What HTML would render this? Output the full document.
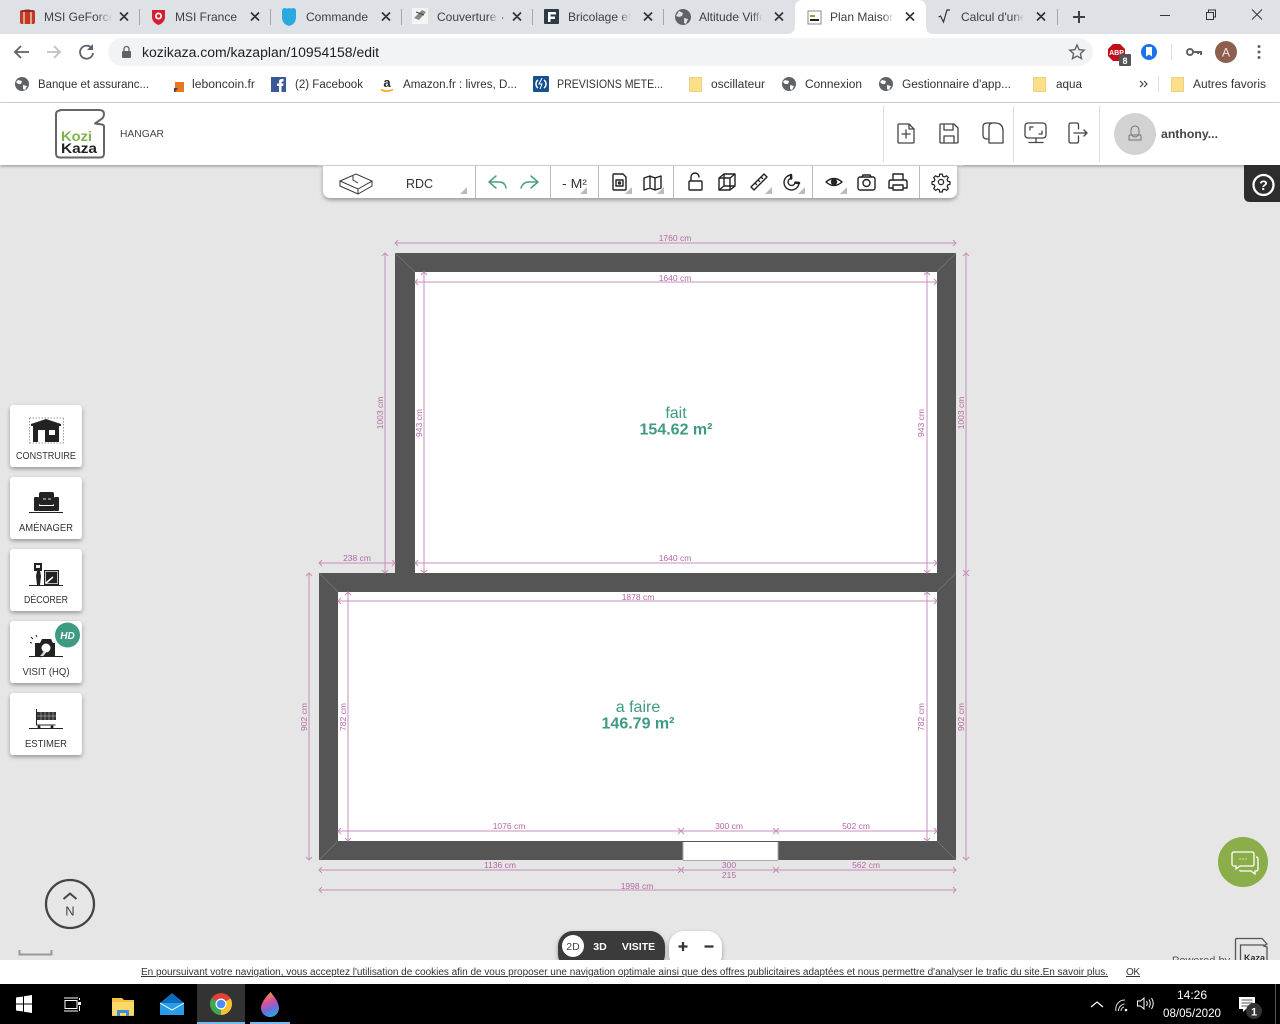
<!DOCTYPE html>
<html lang="fr"><head><meta charset="utf-8"><title>Plan Maison</title>
<style>
html,body{margin:0;padding:0;width:1280px;height:1024px;overflow:hidden;background:#e6e6e6}
svg{display:block;position:absolute;left:0;top:0}
text{font-family:"Liberation Sans",sans-serif}
.tab{font-size:12px;fill:#3c4043}
.bm{font-size:11.5px;fill:#333}
.x{stroke:#333;stroke-width:1.7;fill:none}
.sep{stroke:#a5a8ad;stroke-width:1}
.d{stroke:#c78fbc;stroke-width:1;fill:none}
.dt{font-size:8.5px;fill:#b268a4;text-anchor:middle}
.ic{stroke:#222;stroke-width:1.4;fill:none;stroke-linejoin:round;stroke-linecap:round}
.ih{stroke:#444;stroke-width:1.3;fill:none;stroke-linejoin:round;stroke-linecap:round}
.tri{fill:#bbb}
.lab{font-size:10px;fill:#333;text-anchor:middle}
</style></head><body>
<svg width="1280" height="1024" viewBox="0 0 1280 1024" xmlns="http://www.w3.org/2000/svg">
<defs>
<filter id="sh" x="-20%" y="-20%" width="140%" height="150%"><feDropShadow dx="0" dy="2" stdDeviation="2" flood-color="#000" flood-opacity=".35"/></filter>
<filter id="sh2" x="-5%" y="-20%" width="110%" height="160%"><feDropShadow dx="0" dy="1" stdDeviation="1.5" flood-color="#000" flood-opacity=".4"/></filter>
<linearGradient id="fd"><stop offset="0" stop-color="#dee1e6" stop-opacity="0"/><stop offset=".75" stop-color="#dee1e6"/></linearGradient>
<linearGradient id="fw"><stop offset="0" stop-color="#fff" stop-opacity="0"/><stop offset=".75" stop-color="#fff"/></linearGradient>
<linearGradient id="drop" x1=".3" y1="0" x2=".6" y2="1"><stop offset="0" stop-color="#f6a12c"/><stop offset=".4" stop-color="#d64fa0"/><stop offset=".7" stop-color="#6a6fdc"/><stop offset="1" stop-color="#2aa9e0"/></linearGradient>
</defs>

<!-- canvas -->
<rect width="1280" height="1024" fill="#e6e6e6"/>

<!-- tab strip -->
<rect width="1280" height="34" fill="#dee1e6"/>
<path d="M787 34q8 0 8-8V8q0-8 8-8h115q8 0 8 8v18q0 8 8 8z" fill="#fff"/>
<g class="sep"><path d="M139.500 9v16M270.500 9v16M401.500 9v16M532.500 9v16M663.500 9v16M1057.500 9v16"/></g>
<text class="tab" x="44" y="21">MSI GeForce</text><rect x="96" y="8" width="22" height="18" fill="url(#fd)"/>
<text class="tab" x="175" y="21">MSI France</text>
<text class="tab" x="306" y="21">Commande</text>
<text class="tab" x="437" y="21">Couverture -</text><rect x="488" y="8" width="14" height="18" fill="url(#fd)"/>
<text class="tab" x="568" y="21">Bricolage et</text><rect x="620" y="8" width="14" height="18" fill="url(#fd)"/>
<text class="tab" x="699" y="21">Altitude Viffo</text><rect x="752" y="8" width="14" height="18" fill="url(#fd)"/>
<text class="tab" x="830" y="21">Plan Maison</text><rect x="883" y="8" width="14" height="18" fill="url(#fw)"/>
<text class="tab" x="961" y="21">Calcul d'une</text><rect x="1013" y="8" width="14" height="18" fill="url(#fd)"/>
<g class="x">
<path d="M120 12.500l8 8M128 12.500l-8 8M251 12.500l8 8M259 12.500l-8 8M382 12.500l8 8M390 12.500l-8 8M513 12.500l8 8M521 12.500l-8 8M644 12.500l8 8M652 12.500l-8 8M775 12.500l8 8M783 12.500l-8 8M906 12.500l8 8M914 12.500l-8 8M1037 12.500l8 8M1045 12.500l-8 8"/>
</g>
<!-- tab icons -->
<rect x="20" y="10" width="15" height="14" rx="2" fill="#c0392b"/><path d="M24 10v14M31 10v14" stroke="#f3c9a0" stroke-width="1.500"/><path d="M20 12q7.500-5 15 0" fill="#8d2a1e"/>
<path d="M152 10h13v8q-1 5-6.500 7q-5.500-2-6.500-7z" fill="#d4202e"/><circle cx="158.500" cy="16" r="3.500" fill="#fff"/><circle cx="158.500" cy="16" r="1.800" fill="#d4202e"/>
<path d="M282 11q0-3 3-3q2 1 4 0q2 1 4 0q3 0 3 3v6q0 7-7 9q-7-2-7-9z" fill="#29a9e0"/>
<rect x="412" y="8" width="16" height="16" fill="#f4f4f4"/><path d="M414 18l8-8 4 2-7 8z" fill="#888"/><path d="M416 12l8 3" stroke="#444"/>
<rect x="544" y="9" width="15" height="15" rx="1" fill="#2c3946"/><path d="M548 12h8v2.500h-5.500v2h4.500v2.500h-4.500v3H548z" fill="#fff"/>
<g><circle cx="683" cy="17" r="8" fill="#5f6368"/><path d="M679 11l4 2-1 3-3 1-3-1zM684 18l4 1-2 5-2-1z" fill="#dee1e6"/></g>
<rect x="808" y="11" width="13" height="13" fill="#fff" stroke="#888"/><path d="M810 16h5" stroke="#7aa63f" stroke-width="2"/><path d="M810 20h9" stroke="#222" stroke-width="2"/>
<path d="M938.500 17l2-1 3 6 3.500-12h3" stroke="#333" stroke-width="1.200" fill="none"/>
<path d="M1079 11v12M1073 17h12" stroke="#3c4043" stroke-width="2" fill="none"/>
<!-- window controls -->
<path d="M1160 15.500h10" stroke="#333" stroke-width="1"/>
<path d="M1206.500 12.500h7v7h-7zM1208.500 12.500v-2.500h7v7h-2" stroke="#333" fill="none"/>
<path d="M1252 9.500l10 10M1262 9.500l-10 10" stroke="#333" fill="none"/>

<!-- toolbar -->
<rect y="34" width="1280" height="68" fill="#fff"/>
<rect x="108" y="38" width="985" height="28" rx="14" fill="#f1f3f4"/>
<path d="M21 46l-6 6 6 6M15 52h14" stroke="#5f6368" stroke-width="1.800" fill="none"/>
<path d="M54 46l6 6-6 6M47 52h13" stroke="#bdc1c6" stroke-width="1.800" fill="none"/>
<path d="M91.500 48a6.500 6.500 0 1 0 1.500 5" stroke="#5f6368" stroke-width="1.800" fill="none"/><path d="M93 44v6h-6z" fill="#5f6368"/>
<rect x="122" y="51" width="9" height="7" rx="1" fill="#5f6368"/><path d="M124 51v-2a2.500 2.500 0 0 1 5 0v2" stroke="#5f6368" stroke-width="1.300" fill="none"/>
<text x="142" y="57" font-size="13.500" fill="#202124" textLength="237" lengthAdjust="spacingAndGlyphs">kozikaza.com/kazaplan/10954158/edit</text>
<path d="M1077 45l2.100 4.700 5.100.5-3.800 3.400 1.100 5-4.500-2.600-4.500 2.600 1.100-5-3.800-3.400 5.100-.5z" stroke="#5f6368" stroke-width="1.400" fill="none"/>
<path d="M1113 44h7l5 5v7l-5 5h-7l-5-5v-7z" fill="#c0101c"/>
<text x="1116.500" y="55" font-size="7" font-weight="bold" fill="#fff" text-anchor="middle">ABP</text>
<rect x="1119" y="54" width="12" height="12" rx="1" fill="#555"/><text x="1125" y="64" font-size="9" font-weight="bold" fill="#fff" text-anchor="middle">8</text>
<circle cx="1149" cy="52" r="8" fill="#1a73e8"/><path d="M1146 47h6v9.500l-3-2-3 2z" fill="#fff"/>
<path d="M1171.500 44v16" stroke="#ddd"/>
<circle cx="1190" cy="52" r="3" stroke="#5f6368" stroke-width="2" fill="none"/><path d="M1193 52h8v3M1198 52v2" stroke="#5f6368" stroke-width="2" fill="none"/>
<circle cx="1226" cy="52" r="11" fill="#8c5f50"/><text x="1226" y="56.500" font-size="12" fill="#f3e6e0" text-anchor="middle">A</text>
<circle cx="1259" cy="46.500" r="1.500" fill="#5f6368"/><circle cx="1259" cy="52" r="1.500" fill="#5f6368"/><circle cx="1259" cy="57.500" r="1.500" fill="#5f6368"/>

<!-- bookmarks -->
<g fill="#5f6368">
<circle cx="22" cy="84" r="7"/><circle cx="789" cy="84" r="7"/><circle cx="886" cy="84" r="7"/>
</g>
<g fill="#fff"><path d="M18 80l4 1-1 3-3 0-2-2zM23 85l4 1-2 4-2-1zM785 80l4 1-1 3-3 0-2-2zM790 85l4 1-2 4-2-1zM882 80l4 1-1 3-3 0-2-2zM887 85l4 1-2 4-2-1z"/></g>
<text class="bm" x="38" y="88" textLength="111" lengthAdjust="spacingAndGlyphs">Banque et assuranc...</text>
<rect x="175" y="82" width="9" height="10" fill="#e87722"/><path d="M174 92v-4l4 0-3 4z" fill="#444"/>
<text class="bm" x="192" y="88" textLength="63" lengthAdjust="spacingAndGlyphs">leboncoin.fr</text>
<rect x="271" y="77" width="15" height="15" fill="#3b5998"/><path d="M279 92v-6h-2v-2.500h2v-2q0-2.500 3-2.500h1.500v2.500h-1q-1 0-1 1v1h2l-.4 2.500h-1.600v6z" fill="#fff"/>
<text class="bm" x="295" y="88" textLength="68" lengthAdjust="spacingAndGlyphs">(2) Facebook</text>
<text x="387" y="87" font-size="13" font-weight="bold" fill="#222" text-anchor="middle">a</text><path d="M381 89.500q6 3.500 12 0" stroke="#f90" stroke-width="1.500" fill="none"/>
<text class="bm" x="403" y="88" textLength="114" lengthAdjust="spacingAndGlyphs">Amazon.fr : livres, D...</text>
<rect x="533" y="76" width="16" height="16" rx="1" fill="#15508f"/><path d="M538 80a5 5 0 0 0 0 8M544 80a5 5 0 0 1 0 8" stroke="#fff" stroke-width="1.500" fill="none"/><path d="M542 78l-3 6h3l-2 5" stroke="#fff" fill="none"/>
<text class="bm" x="557" y="88" textLength="106" lengthAdjust="spacingAndGlyphs">PREVISIONS METE...</text>
<g fill="#fbe08a" stroke="#e8c765" stroke-width=".7">
<path d="M689.500 77.500h12v14h-12zM1033.500 77.500h12v14h-12zM1171.500 77.500h12v14h-12z"/></g>
<text class="bm" x="711" y="88" textLength="54" lengthAdjust="spacingAndGlyphs">oscillateur</text>
<text class="bm" x="805" y="88" textLength="57" lengthAdjust="spacingAndGlyphs">Connexion</text>
<text class="bm" x="902" y="88" textLength="109" lengthAdjust="spacingAndGlyphs">Gestionnaire d'app...</text>
<text class="bm" x="1056" y="88" textLength="26" lengthAdjust="spacingAndGlyphs">aqua</text>
<path d="M1140 81l3 3-3 3M1144 81l3 3-3 3" stroke="#444" stroke-width="1.200" fill="none"/>
<path d="M1158.500 76v16" stroke="#ddd"/>
<text class="bm" x="1193" y="88" textLength="73" lengthAdjust="spacingAndGlyphs">Autres favoris</text>

<!-- page header -->
<rect y="102" width="1280" height="1" fill="#ddd"/>
<rect y="103" width="1280" height="62" fill="#fff" filter="url(#sh2)"/>
<path d="M60 110h39q5 0 5 4q0 4-4 6l-5 3.500 7 1q2 .5 2 2v27q0 4-4 4H60q-4 0-4-4v-39q0-4 4-4z" fill="#fff" stroke="#666" stroke-width="2" stroke-linejoin="round"/>
<text x="61" y="141" font-size="14" font-weight="bold" fill="#7fb24a" textLength="31" lengthAdjust="spacingAndGlyphs">Kozi</text>
<text x="61" y="153" font-size="14" font-weight="bold" fill="#222" textLength="36" lengthAdjust="spacingAndGlyphs">Kaza</text>
<text x="120" y="137" font-size="10.500" fill="#444" textLength="44" lengthAdjust="spacingAndGlyphs">HANGAR</text>
<g stroke="#ddd"><path d="M883.500 106v56M1013.500 106v56M1099.500 106v56"/></g>
<g class="ih">
<path d="M899 124h10l5 5v13q0 1-1 1h-14q-1 0-1-1v-17q0-1 1-1zM909 124v5h5M906 130v8M902 134h8"/>
<path d="M941 124h13l4 4v14q0 1-1 1h-16q-1 0-1-1v-17q0-1 1-1zM944 124v6h9v-6M944 143v-7h10v7"/>
<path d="M994 123h-7q-4 0-4 4v8q0 4 4 4h2M989 143v-16q0-4 4-4h2q8 0 8 8v12z"/>
<rect x="1025" y="123" width="21" height="15" rx="3"/><path d="M1036 138v4M1029 142.500h14M1030 130v-3h3M1042 131v3h-3"/>
<path d="M1077 123h-6q-2 0-2 2v16q0 2 2 2h6q1.500 0 1.500-2v-5M1078.500 129v-4q0-2-1.500-2M1074 133h13M1084 130l3 3-3 3"/>
</g>
<circle cx="1135" cy="134" r="21" fill="#d2d2d2"/>
<path d="M1131 130a4 4 0 0 1 8 0v3a4 4 0 0 1-8 0zM1130 135h10q1 0 1 1v4h-12v-4q0-1 1-1z" stroke="#777" fill="none"/>
<text x="1161" y="138" font-size="12" font-weight="bold" fill="#444" textLength="57" lengthAdjust="spacingAndGlyphs">anthony...</text>

<!-- help -->
<path d="M1244 165h36v37h-30q-6 0-6-6z" fill="#2d2d2d"/>
<circle cx="1263.500" cy="185" r="10" stroke="#fff" stroke-width="2.300" fill="none"/>
<text x="1263.500" y="190" font-size="14" font-weight="bold" fill="#fff" text-anchor="middle">?</text>

<!-- floor plan -->
<g>
<path d="M395 253h561v607H319V573h76z" fill="#555"/>
<rect x="415" y="272" width="522" height="301" fill="#fff"/>
<rect x="338" y="592" width="599" height="249" fill="#fff"/>
<rect x="683" y="842" width="95" height="18" fill="#fff"/>
<path d="M683 842v18M778 842v18M683 860.500h95" stroke="#aaa" fill="none"/>
<g stroke="#777" stroke-width=".7"><path d="M395 253l20 19M956 253l-19 19M319 573l19 19M319 860l19-19M956 860l-19-19M956 573l-19 19"/></g>
</g>
<g class="d">
<path d="M395 243h561M398 240l-3 3 3 3M953 240l3 3-3 3"/>
<path d="M415 282h522M418 279l-3 3 3 3M934 279l3 3-3 3"/>
<path d="M385 253v320M382 256l3-3 3 3M382 570l3 3 3-3"/>
<path d="M966 253v320M963 256l3-3 3 3M963 570l6 6M969 570l-6 6"/>
<path d="M966 573v287M963 857l3 3 3-3"/>
<path d="M424 272v301M421 275l3-3 3 3M421 570l3 3 3-3"/>
<path d="M927 272v301M924 275l3-3 3 3M924 570l3 3 3-3"/>
<path d="M415 563h522M418 560l-3 3 3 3M934 560l3 3-3 3"/>
<path d="M319 563h76M322 560l-3 3 3 3M392 560l3 3-3 3"/>
<path d="M309 573v287M306 576l3-3 3 3M306 857l3 3 3-3"/>
<path d="M348 592v249M345 595l3-3 3 3M345 838l3 3 3-3"/>
<path d="M927 592v249M924 595l3-3 3 3M924 838l3 3 3-3"/>
<path d="M338 601h599M341 598l-3 3 3 3M934 598l3 3-3 3"/>
<path d="M338 831h599M341 828l-3 3 3 3M934 828l3 3-3 3"/>
<path d="M678 828l6 6M684 828l-6 6M773 828l6 6M779 828l-6 6"/>
<path d="M319 870h637M322 867l-3 3 3 3M953 867l3 3-3 3"/>
<path d="M678 867l6 6M684 867l-6 6M773 867l6 6M779 867l-6 6"/>
<path d="M319 890h637M322 887l-3 3 3 3M953 887l3 3-3 3"/>
</g>
<g class="dt">
<text x="675" y="241">1760 cm</text>
<text x="675" y="281">1640 cm</text>
<text x="675" y="561">1640 cm</text>
<text x="357" y="561">238 cm</text>
<text x="638" y="600">1878 cm</text>
<text x="509" y="829">1076 cm</text>
<text x="729" y="829">300 cm</text>
<text x="856" y="829">502 cm</text>
<text x="500" y="868">1136 cm</text>
<text x="729" y="868">300</text>
<text x="729" y="878">215</text>
<text x="866" y="868">562 cm</text>
<text x="637" y="889">1998 cm</text>
<text transform="translate(383 413) rotate(-90)">1003 cm</text>
<text transform="translate(964 413) rotate(-90)">1003 cm</text>
<text transform="translate(422 423) rotate(-90)">943 cm</text>
<text transform="translate(924 423) rotate(-90)">943 cm</text>
<text transform="translate(307 717) rotate(-90)">902 cm</text>
<text transform="translate(964 717) rotate(-90)">902 cm</text>
<text transform="translate(346 717) rotate(-90)">782 cm</text>
<text transform="translate(924 717) rotate(-90)">782 cm</text>
</g>
<g text-anchor="middle" fill="#3f9a83">
<text x="676" y="418" font-size="16">fait</text>
<text x="676" y="434.500" font-size="16" font-weight="bold">154.62 m²</text>
<text x="638" y="712" font-size="16">a faire</text>
<text x="638" y="728.500" font-size="16" font-weight="bold">146.79 m²</text>
</g>

<!-- top tools -->
<path d="M323 166h634v24q0 8-8 8H331q-8 0-8-8z" fill="#fff" filter="url(#sh)"/>
<rect y="165" x="318" width="645" height="1" fill="#ccc"/>
<g stroke="#bbb"><path d="M475.500 166v32M550.500 166v32M598.500 166v32M673.500 166v32M812.500 166v32M919.500 166v32"/></g>
<g stroke="#333" fill="none" stroke-width="1"><path d="M340 181l16-7 16 7-14 8zM340 181v5l18 8 14-8v-5M358 189v5M353 176v4l5 3"/></g>
<text x="419.500" y="188" font-size="12.500" fill="#333" text-anchor="middle">RDC</text>
<g class="tri"><path d="M467 187v7h-7zM587 187v7h-7zM632 187v7h-7zM664 187v7h-7zM772 187v7h-7zM805 187v7h-7zM847 187v7h-7z"/></g>
<g stroke="#4e9d87" stroke-width="1.500" fill="none" stroke-linecap="round" stroke-linejoin="round">
<path d="M496 176l-7 6 7 6M489 182h10q6 0 7 6"/>
<path d="M531 176l7 6-7 6M538 182h-9q-6 0-8 6"/>
</g>
<text x="562" y="188" font-size="12.500" fill="#333" textLength="25" lengthAdjust="spacingAndGlyphs">- M²</text>
<g class="ic">
<path d="M614 174h9l3 3v12q0 1-1 1h-11q-1 0-1-1v-14q0-1 1-1z"/><rect x="616" y="180" width="7" height="6"/><circle cx="619.500" cy="183" r="1"/>
<path d="M644 178l6-2 5 2 6-2v12l-6 2-5-2-6 2zM650 176v12M655 178v12"/>
<path d="M689 189v-7q0-1 1-1h11q1 0 1 1v7q0 1-1 1h-11q-1 0-1-1zM691 181v-4a4 4 0 0 1 8 0"/>
<path d="M719 178h11v12h-11zM719 178l5-4h11v12l-5 4M735 174l-5 4M724 174v12h11M724 186l-5 4"/>
<path d="M751 187l13-13 3 3-13 13zM755 183l1.500 1.500M758 180l1.500 1.500M761 177l1.500 1.500"/>
<path d="M791 175a7.500 7.500 0 1 0 8 8l-4-.5a3.500 3.500 0 1 1-4-4z"/>
<path d="M791 175l.2 3.500" stroke-width="2.500"/><path d="M799 183l-3.500-.4" stroke-width="2.500"/>
<path d="M826 182q8-7 16 0q-8 7-16 0z"/><circle cx="834" cy="182" r="2.500" fill="#222"/>
<rect x="858" y="177" width="17" height="13" rx="2"/><circle cx="866.500" cy="183" r="3.500"/><path d="M862 177l1-2h7l1 2"/>
<path d="M893 180v-6h10v6M889 188v-6q0-2 2-2h14q2 0 2 2v6h-4M893 188h-4M893 185h10v5h-10z"/>
<g transform="translate(941 182) scale(.88) translate(-941 -182)"><path d="M939.500 173h3l.5 2.500 2 .8 2.200-1.400 2.100 2.100-1.400 2.200.8 2 2.500.5v3l-2.500.5-.8 2 1.400 2.200-2.100 2.100-2.200-1.400-2 .8-.5 2.500h-3l-.5-2.500-2-.8-2.200 1.400-2.100-2.100 1.400-2.200-.8-2-2.500-.5v-3l2.500-.5.8-2-1.400-2.200 2.100-2.100 2.200 1.400 2-.8z"/><circle cx="941" cy="182" r="3"/></g>
</g>

<!-- side buttons -->
<g fill="#fff" filter="url(#sh)">
<rect x="10" y="405" width="72" height="62" rx="3"/>
<rect x="10" y="477" width="72" height="62" rx="3"/>
<rect x="10" y="549" width="72" height="62" rx="3"/>
<rect x="10" y="621" width="72" height="62" rx="3"/>
<rect x="10" y="693" width="72" height="62" rx="3"/>
</g>
<text class="lab" x="46" y="459" textLength="60" lengthAdjust="spacingAndGlyphs">CONSTRUIRE</text>
<text class="lab" x="46" y="531" textLength="54" lengthAdjust="spacingAndGlyphs">AMÉNAGER</text>
<text class="lab" x="46" y="603" textLength="44" lengthAdjust="spacingAndGlyphs">DÉCORER</text>
<text class="lab" x="46" y="675" textLength="47" lengthAdjust="spacingAndGlyphs">VISIT (HQ)</text>
<text class="lab" x="46" y="747" textLength="42" lengthAdjust="spacingAndGlyphs">ESTIMER</text>
<!-- construire -->
<path d="M31 424l15-5 15 5v2h-2v16H33v-16h-2z" fill="#222"/>
<rect x="38" y="430" width="7" height="12" fill="#fff"/><rect x="49" y="430" width="6" height="5" fill="#fff"/>
<path d="M29.500 418h34M29.500 443h34M29.500 418v25M63.500 418v25" stroke="#999" stroke-dasharray="1.500 1.500" fill="none"/>
<!-- amenager -->
<rect x="39" y="492" width="15" height="13" rx="2" fill="#222"/>
<rect x="34" y="497" width="5" height="14" rx="1" fill="#222"/>
<rect x="54" y="497" width="5" height="14" rx="1" fill="#222"/>
<rect x="39" y="506" width="15" height="5" fill="#222"/>
<path d="M43 499h3M48 499h3" stroke="#ddd"/>
<path d="M29 512.500h34" stroke="#222"/>
<!-- decorer -->
<rect x="34" y="563" width="8" height="8" fill="#222"/><rect x="36" y="565" width="4" height="3" fill="#eee"/>
<path d="M37 571h3l1 5-1 9h-3l-1-9z" fill="#222"/>
<rect x="44" y="570" width="15" height="15" fill="#222"/><rect x="45.500" y="571.500" width="12" height="12" fill="none" stroke="#fff" stroke-width=".7"/><path d="M46 583l7-6" stroke="#fff" stroke-width="1.500"/>
<path d="M29 585.500h34" stroke="#222"/>
<!-- visit -->
<path d="M35 643h5l2-4h9l2 4h2v13H35z" fill="#222"/><circle cx="46" cy="648" r="4.500" fill="#fff"/><path d="M40 658l5-6" stroke="#ddd" stroke-width="2.500"/>
<path d="M29 656.500h34M33 639l-2-2M37 637l-1-2M32 643l-2-.5" stroke="#222"/>
<circle cx="67.500" cy="635" r="12.500" fill="#3f9a83"/>
<text x="67.500" y="639" font-size="10" font-weight="bold" font-style="italic" fill="#fff" text-anchor="middle">HD</text>
<!-- estimer -->
<path d="M36.500 709v16h19" stroke="#222" fill="none"/>
<rect x="37" y="712" width="19" height="8" fill="#333"/>
<path d="M41 712v8M45 712v8M49 712v8M53 712v8M37 716h19" stroke="#ccc" stroke-width=".5"/>
<circle cx="39" cy="727" r="1.500" fill="#222"/><circle cx="52" cy="727" r="1.500" fill="#222"/><path d="M29 728.500h34" stroke="#222"/>

<!-- compass -->
<circle cx="70" cy="904" r="24" fill="none" stroke="#444" stroke-width="2.300"/>
<path d="M63.500 899l6.500-5.500 6.500 5.500" stroke="#444" stroke-width="2" fill="none"/>
<text x="70" y="915.500" font-size="13" fill="#444" text-anchor="middle">N</text>
<path d="M19.500 950v4.500h32V950" stroke="#999" stroke-width="2" fill="none"/>

<!-- view pill -->
<rect x="558" y="931" width="107" height="38" rx="15" fill="#3a3a3a" filter="url(#sh)"/>
<circle cx="573" cy="946" r="11" fill="#fff"/>
<text x="573" y="950" font-size="10.500" fill="#444" text-anchor="middle">2D</text>
<text x="600" y="950" font-size="10.500" font-weight="bold" fill="#fff" text-anchor="middle">3D</text>
<text x="638.500" y="950" font-size="10.500" font-weight="bold" fill="#fff" text-anchor="middle">VISITE</text>
<rect x="669" y="931" width="53" height="38" rx="15" fill="#fff" filter="url(#sh)"/>
<path d="M683 942v9M678.500 946.500h9M704.500 946.500h9" stroke="#333" stroke-width="2.200"/>

<!-- chat -->
<circle cx="1243" cy="862" r="25" fill="#8bae4b"/>
<path d="M1234 852h18q2 0 2 2v10q0 2-2 2h-12l-4 3v-3h-2q-2 0-2-2v-10q0-2 2-2zM1256 857q2 0 2 2v10q0 2-2 2h-1v3l-4-3h-10q-1 0-1.500-1" stroke="#fff" stroke-width="1.300" fill="none"/>
<circle cx="1240" cy="859" r=".6" fill="#fff"/><circle cx="1243" cy="859" r=".6" fill="#fff"/><circle cx="1246" cy="859" r=".6" fill="#fff"/>

<!-- powered by -->
<text x="1172" y="964" font-size="11" fill="#555">Powered by</text>
<path d="M1235.500 960v-20q0-1.500 1.500-1.500h25l5 5.500-3 2 3 1v13" fill="none" stroke="#555" stroke-width="1.300"/>
<path d="M1240.500 960v-15h24" fill="none" stroke="#555" stroke-width="1.300"/>
<text x="1244" y="961" font-size="9" font-weight="bold" fill="#333">Kaza</text>

<!-- cookie bar -->
<rect y="960" width="1280" height="24" fill="#fff"/>
<text x="141" y="975" font-size="10" fill="#333" text-decoration="underline" textLength="967">En poursuivant votre navigation, vous acceptez l'utilisation de cookies afin de vous proposer une navigation optimale ainsi que des offres publicitaires adaptées et nous permettre d'analyser le trafic du site.En savoir plus.</text>
<text x="1126" y="975" font-size="10" fill="#333" text-decoration="underline" textLength="14">OK</text>

<!-- taskbar -->
<rect y="984" width="1280" height="40" fill="#000"/>
<rect x="197" y="984" width="48" height="40" fill="#333"/>
<rect x="197" y="1022" width="48" height="2" fill="#76b9ed"/>
<rect x="250" y="1022" width="40" height="2" fill="#76b9ed"/>
<path d="M16 997.500l7-1v7h-7zM24 996.300l8-1.300v8.500h-8zM16 1004.500h7v7l-7-1zM24 1004.500h8v8.500l-8-1.300z" fill="#fff"/>
<g stroke="#fff" fill="none"><path d="M65 1000.500h12v8H65zM64 998h14M64 1011h14M79.500 998v2M79.500 1006v5"/></g><rect x="78" y="1002" width="3" height="3" fill="#fff"/>
<path d="M112 998h10l2 2h10v16h-22z" fill="#f5c242"/><rect x="112" y="1002" width="22" height="13" fill="#fbd869"/><path d="M117 1016v-6h12v6h-3v-3h-6v3z" fill="#3f8fd6"/>
<path d="M160 1003l12-10 12 10z" fill="#0f6cbd"/><rect x="160" y="1003" width="24" height="12" fill="#2a9de8"/><path d="M160 1003l12 7 12-7" stroke="#fff" stroke-width="1" fill="none"/>
<circle cx="221" cy="1004" r="11" fill="#db4437"/>
<path d="M221 1004l9.500-5.500a11 11 0 0 1-9.500 16.500z" fill="#fbc02d"/>
<path d="M221 1004l-9.500-5.500a11 11 0 0 0 9.500 16.500z" fill="#3aa757"/>
<circle cx="221" cy="1004" r="5.500" fill="#fff"/><circle cx="221" cy="1004" r="4.300" fill="#4a8df6"/>
<path d="M270.500 992q8.500 10 8.500 16a9 9 0 0 1-18 0q0-6 9.500-16z" fill="url(#drop)"/>
<!-- tray -->
<path d="M1091 1007l6-5 6 5" stroke="#fff" stroke-width="1.200" fill="none"/>
<path d="M1116 1011a9 9 0 0 1 9-11M1118.500 1011a7 7 0 0 1 6-7M1121 1011a4 4 0 0 1 3-4" stroke="#ddd" fill="none"/><circle cx="1126" cy="1010" r="1.300" fill="#fff"/>
<path d="M1137.500 1001h3l3.500-3v11l-3.500-3h-3zM1146.500 1001q1.500 2.500 0 5M1149 999.500q2.500 4 0 8M1151.500 998q3.500 5.500 0 11" stroke="#fff" fill="none"/>
<text x="1192" y="999" font-size="12" fill="#fff" text-anchor="middle">14:26</text>
<text x="1192" y="1017" font-size="12" fill="#fff" text-anchor="middle" textLength="58" lengthAdjust="spacingAndGlyphs">08/05/2020</text>
<path d="M1239 997h16v12h-9l-3 3v-3h-4z" fill="#fff"/>
<path d="M1241.500 1000h11M1241.500 1003h11M1241.500 1006h7" stroke="#555"/>
<circle cx="1254" cy="1011" r="8" fill="#333"/><text x="1254" y="1015.500" font-size="11" font-weight="bold" fill="#fff" text-anchor="middle">1</text>
<path d="M1275.500 984v40" stroke="#555"/>
</svg>
</body></html>
